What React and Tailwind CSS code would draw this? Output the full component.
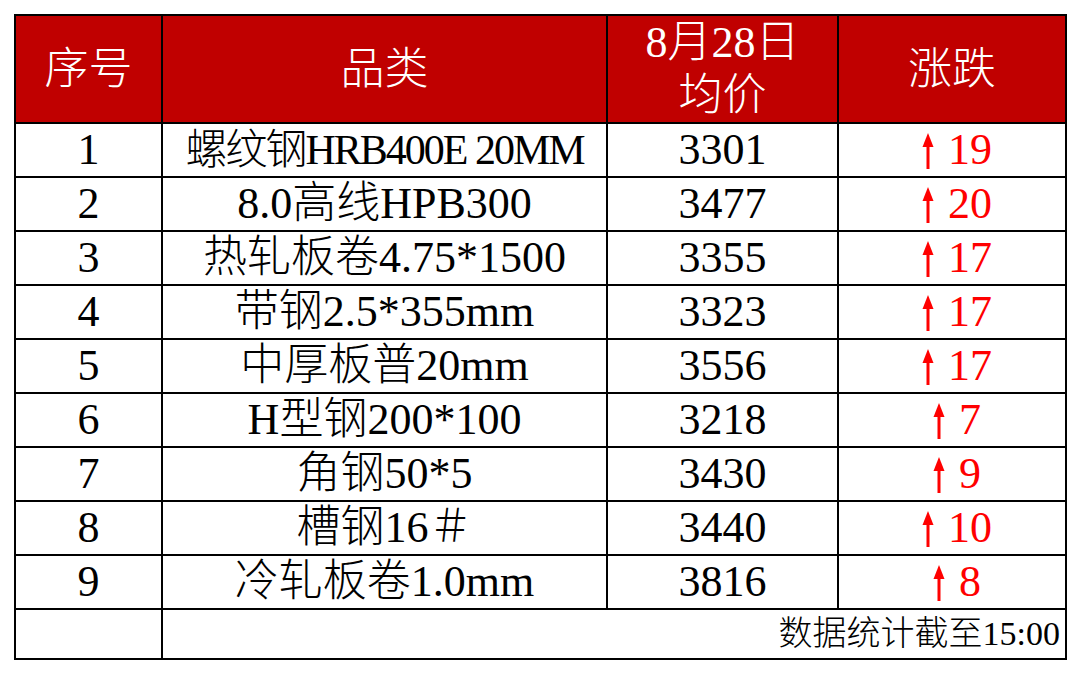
const rows = [
  { no: 1, name: "螺纹钢HRB400E 20MM", price: 3301, change: 19, tight: true },
  { no: 2, name: "8.0高线HPB300", price: 3477, change: 20 },
  { no: 3, name: "热轧板卷4.75*1500", price: 3355, change: 17 },
  { no: 4, name: "带钢2.5*355mm", price: 3323, change: 17 },
  { no: 5, name: "中厚板普20mm", price: 3556, change: 17 },
  { no: 6, name: "H型钢200*100", price: 3218, change: 7 },
  { no: 7, name: "角钢50*5", price: 3430, change: 9 },
  { no: 8, name: "槽钢16＃", price: 3440, change: 10 },
  { no: 9, name: "冷轧板卷1.0mm", price: 3816, change: 8 },
];

function UpArrow() {
  return (
    <svg width="12" height="36" viewBox="0 0 12 36" className="shrink-0 mt-[2px]">
      <rect x="4.5" y="10" width="3" height="26" fill="#ff0000" />
      <path d="M6 0 L11.5 14 L0.5 14 Z" fill="#ff0000" />
    </svg>
  );
}

export default function App() {
  const font = { fontFamily: '"Liberation Serif", "Noto Sans CJK SC", serif' };

  return (
    <div className="min-h-screen bg-white pt-[14px] pl-[14px] font-light" style={font}>
      <table className="table-fixed border-collapse border-2 border-black w-[1051px]">
        <colgroup>
          <col className="w-[147px]" />
          <col className="w-[445px]" />
          <col className="w-[231px]" />
          <col className="w-[228px]" />
        </colgroup>
        <thead>
          <tr className="h-[106px] bg-[#c00000] text-white text-[44px] leading-[53px]">
            <th className="border-2 border-black font-light">序号</th>
            <th className="border-2 border-black font-light">品类</th>
            <th className="border-2 border-black font-light">
              <div>8月28日</div>
              <div>均价</div>
            </th>
            <th className="border-2 border-black font-light">涨跌</th>
          </tr>
        </thead>
        <tbody className="text-[44px] leading-none text-black">
          {rows.map((r) => (
            <tr key={r.no} className="h-[54px]">
              <td className="border-2 border-black text-center p-0">{r.no}</td>
              <td
                className={
                  r.tight
                    ? "border-2 border-black text-center p-0 whitespace-nowrap text-[42px] tracking-[-2px]"
                    : "border-2 border-black text-center p-0 whitespace-nowrap"
                }
              >
                {r.name}
              </td>
              <td className="border-2 border-black text-center p-0">{r.price}</td>
              <td className="border-2 border-black p-0">
                <div className="flex items-center justify-center gap-[14px] text-[#ff0000] pl-[10px]">
                  <UpArrow />
                  <span>{r.change}</span>
                </div>
              </td>
            </tr>
          ))}
          <tr className="h-[50px]">
            <td className="border-2 border-black p-0"></td>
            <td colSpan={3} className="border-2 border-black p-0 pr-[5px] text-right text-[34px] leading-none">
              数据统计截至15:00
            </td>
          </tr>
        </tbody>
      </table>
    </div>
  );
}
